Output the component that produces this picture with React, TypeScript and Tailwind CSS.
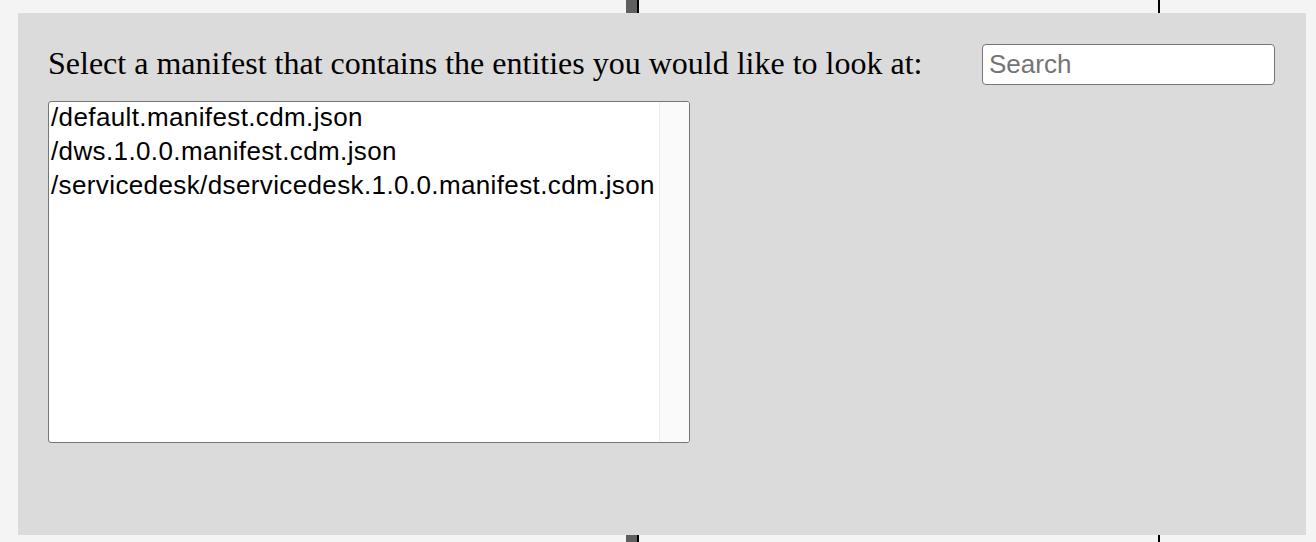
import React from "react";

export default function App() {
  const items = [
    "/default.manifest.cdm.json",
    "/dws.1.0.0.manifest.cdm.json",
    "/servicedesk/dservicedesk.1.0.0.manifest.cdm.json",
  ];
  return (
    <div className="relative w-[1316px] h-[542px] bg-[#f4f4f4] overflow-hidden">
      <div className="absolute left-[626px] top-0 h-full w-[11px] bg-[#5f5f5f]" />
      <div className="absolute left-[637px] top-0 h-full w-[2px] bg-black" />
      <div className="absolute left-[1158px] top-0 h-full w-[2px] bg-black" />
      <div className="relative z-10 ml-[18px] pt-[13px]">
        <div className="w-[1288px] h-[522px] bg-[#dbdbdb] pl-[30px] pr-[31px] pt-[31px]">
          <div className="flex items-center justify-between h-[41px]">
            <div className="-mt-[4px] text-[32px] leading-[38px] text-black [font-family:'Liberation_Serif',serif]">
              Select a manifest that contains the entities you would like to look at:
            </div>
            <input
              placeholder="Search"
              className="w-[293px] h-[41px] border border-[#767676] rounded-[4px] bg-white px-[6px] text-[26px] text-black placeholder:text-[#757575] [font-family:'Liberation_Sans',Arial,sans-serif] outline-none"
            />
          </div>
          <div className="mt-[16px] flex w-[642px] h-[342px] border border-[#767676] rounded-[3px] bg-white overflow-hidden">
            <div className="flex-1 -mt-[2px] pl-[2px] text-[26px] leading-[34px] tracking-[0.38px] text-black [font-family:'Liberation_Sans',Arial,sans-serif] whitespace-nowrap">
              {items.map((it) => (
                <div key={it}>{it}</div>
              ))}
            </div>
            <div className="w-[30px] h-full border-l border-[#ececec] bg-[#fafafa]" />
          </div>
        </div>
      </div>
    </div>
  );
}
